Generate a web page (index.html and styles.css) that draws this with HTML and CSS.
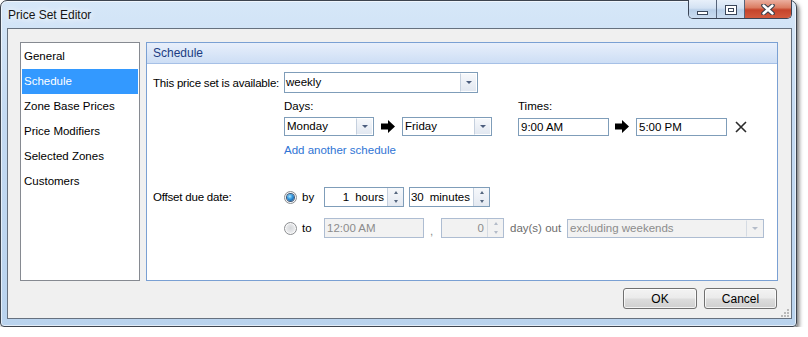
FILE: index.html
```html
<!DOCTYPE html>
<html lang="en">
  <head>
    <meta charset="utf-8" />
    <meta name="viewport" content="width=device-width, initial-scale=1" />
    <link rel="stylesheet" href="styles.css">
    <title>Price Set Editor</title>
  </head>
  <body>
    <div class="window">
      <!-- Barra de título -->
      <div class="titlebar">
        <span class="title">Price Set Editor</span>
        <div class="caption-buttons">
          <span class="cap cap-min"><i></i></span>
          <span class="cap cap-max"><i></i></span>
          <span class="cap cap-close">
            <svg width="14" height="11" viewBox="0 0 14 11">
              <path d="M2.5 1.5 L11.5 9.5 M11.5 1.5 L2.5 9.5" stroke="#3a3f4a" stroke-width="4.6" stroke-linecap="round" fill="none" />
              <path d="M2.5 1.5 L11.5 9.5 M11.5 1.5 L2.5 9.5" stroke="#ffffff" stroke-width="2.4" stroke-linecap="round" fill="none" />
            </svg>
          </span>
        </div>
      </div>

      <div class="client">
        <div class="main">
          <ul class="nav">
            <li>General</li>
            <li class="active">Schedule</li>
            <li>Zone Base Prices</li>
            <li>Price Modifiers</li>
            <li>Selected Zones</li>
            <li>Customers</li>
          </ul>

          <section class="panel">
            <header class="panel-head">Schedule</header>
            <div class="panel-body">
              <div class="row row-avail">
                <span class="field-label">This price set is available:</span>
                <div class="combo combo-avail"><span class="val">weekly</span><span class="drop"></span></div>
              </div>

              <div class="row row-sched">
                <div class="group group-days">
                  <div class="group-label">Days:</div>
                  <div class="group-fields">
                    <div class="combo combo-day"><span class="val">Monday</span><span class="drop"></span></div>
                    <svg class="arrow" width="14" height="13" viewBox="0 0 14 13"><path d="M0 3.5 H7 V0 L14 6.5 L7 13 V9.5 H0 Z" fill="#000" /></svg>
                    <div class="combo combo-day"><span class="val">Friday</span><span class="drop"></span></div>
                  </div>
                </div>
                <div class="group group-times">
                  <div class="group-label">Times:</div>
                  <div class="group-fields">
                    <div class="textbox time">9:00 AM</div>
                    <svg class="arrow arrow-time" width="14" height="13" viewBox="0 0 14 13"><path d="M0 3.5 H7 V0 L14 6.5 L7 13 V9.5 H0 Z" fill="#000" /></svg>
                    <div class="textbox time">5:00 PM</div>
                    <svg class="remove" width="12" height="12" viewBox="0 0 12 12"><path d="M1 1 L11 11 M11 1 L1 11" stroke="#2b2b2b" stroke-width="1.6" fill="none" /></svg>
                  </div>
                </div>
              </div>

              <div class="row row-link">
                <a class="add-link">Add another schedule</a>
              </div>

              <div class="row row-offset">
                <span class="field-label">Offset due date:</span>
                <span class="option"><span class="radio checked"></span><span class="opt-text">by</span></span>
                <div class="spinner spin-hours">
                  <span class="spin-val">1<span class="unit">hours</span></span>
                  <span class="spin-btns"><b class="up"></b><b class="down"></b></span>
                </div>
                <div class="spinner spin-minutes">
                  <span class="spin-val">30<span class="unit">minutes</span></span>
                  <span class="spin-btns"><b class="up"></b><b class="down"></b></span>
                </div>
              </div>

              <div class="row row-to">
                <span class="option"><span class="radio"></span><span class="opt-text">to</span></span>
                <div class="textbox is-disabled box-time">12:00 AM</div>
                <span class="comma">,</span>
                <div class="spinner is-disabled spin-days">
                  <span class="spin-val">0</span>
                  <span class="spin-btns"><b class="up"></b><b class="down"></b></span>
                </div>
                <span class="days-out">day(s) out</span>
                <div class="combo is-disabled combo-excl"><span class="val">excluding weekends</span><span class="drop"></span></div>
              </div>
            </div>
          </section>
        </div>

        <div class="footer">
          <button class="btn btn-ok">OK</button>
          <button class="btn btn-cancel">Cancel</button>
        </div>

        <svg class="grip" width="8" height="8" viewBox="0 0 8 8">
          <rect x="6" y="0" width="2" height="2" fill="#b9b9b9" />
          <rect x="3" y="3" width="2" height="2" fill="#b9b9b9" />
          <rect x="6" y="3" width="2" height="2" fill="#b9b9b9" />
          <rect x="0" y="6" width="2" height="2" fill="#b9b9b9" />
          <rect x="3" y="6" width="2" height="2" fill="#b9b9b9" />
          <rect x="6" y="6" width="2" height="2" fill="#b9b9b9" />
        </svg>
      </div>
    </div>
  </body>
</html>
```

FILE: styles.css
```css
/* Estilos gerais */
*, *::before, *::after {
  box-sizing: border-box;
}

html, body {
  margin: 0;
  padding: 0;
  background: #fff;
  font-family: 'Liberation Sans', Arial, sans-serif;
  font-size: 11.5px;
  color: #000;
}

/* Janela */
.window {
  width: 797px;
  height: 327px;
  display: flex;
  flex-direction: column;
  padding: 0 4px 7px 6px;
  border: 1px solid #3d444f;
  border-radius: 7px 7px 4px 4px;
  background: linear-gradient(180deg, #d6e7f8 0%, #c4daf2 35%, #b9d3ee 100%);
  box-shadow: 2px 3px 4px rgba(0, 0, 0, 0.55), inset 0 0 0 1px rgba(255, 255, 255, 0.6);
}

.titlebar {
  height: 27px;
  flex: none;
  display: flex;
  justify-content: space-between;
  align-items: flex-start;
}

.title {
  margin: 7px 0 0 1px;
  font-size: 12px;
  line-height: 15px;
  color: #141414;
  text-shadow: 0 0 6px #fff, 0 0 10px #fff;
}

.caption-buttons {
  display: flex;
  height: 19px;
  margin-top: -1px;
  border: 1px solid #3b4556;
  border-top: none;
  border-radius: 0 0 5px 5px;
  overflow: hidden;
}

.cap {
  display: flex;
  justify-content: center;
  height: 100%;
  background: linear-gradient(180deg, #e8f0fa 0%, #d3e2f3 45%, #b9cfe8 55%, #cadcf0 100%);
}

.cap-min {
  width: 27px;
}

.cap-min i {
  width: 11px;
  height: 4px;
  margin-top: 11px;
  background: #fff;
  border: 1px solid #3a4659;
}

.cap-max {
  width: 28px;
  border-left: 1px solid #56647a;
}

.cap-max i {
  position: relative;
  width: 12px;
  height: 10px;
  margin-top: 5px;
  background: #fff;
  border: 1px solid #3a4659;
}

.cap-max i::after {
  content: '';
  position: absolute;
  left: 2px;
  top: 2px;
  width: 6px;
  height: 4px;
  border: 1px solid #3a4659;
}

.cap-close {
  width: 47px;
  align-items: center;
  border-left: 1px solid #56647a;
  background: linear-gradient(180deg, #ebaf9f 0%, #db7d63 42%, #c5442b 55%, #d35a3d 100%);
}

/* Área cliente */
.client {
  position: relative;
  height: 291px;
  display: flex;
  flex-direction: column;
  padding: 13px 13px 9px 12px;
  border: 1px solid #66717f;
  background: #f0f0f0;
}

.main {
  height: 239px;
  display: flex;
  gap: 6px;
}

.nav {
  width: 120px;
  margin: 0;
  padding: 1px;
  list-style: none;
  background: #fff;
  border: 1px solid #868a91;
}

.nav li {
  height: 25px;
  line-height: 25px;
  padding-left: 2px;
  color: #000;
}

.nav li.active {
  background: #3399ff;
  color: #fff;
}

/* Painel */
.panel {
  flex: 1;
  display: flex;
  flex-direction: column;
  background: #fff;
  border: 1px solid #7aa0d3;
}

.panel-head {
  height: 21px;
  padding-left: 6px;
  font-size: 12px;
  line-height: 20px;
  color: #1c3c82;
  background: linear-gradient(180deg, #e8effb 0%, #cddef5 100%);
  border-bottom: 1px solid #a6c0e6;
}

.panel-body {
  padding: 0 6px;
}

.row {
  display: flex;
  align-items: center;
  white-space: nowrap;
}

.field-label {
  width: 131px;
  flex: none;
  letter-spacing: -0.2px;
}

.row-avail {
  margin-top: 8px;
}

.row-sched,
.row-link,
.row-to {
  padding-left: 131px;
}

.row-sched {
  margin-top: 6px;
  align-items: flex-start;
}

.group-label {
  line-height: 15px;
}

.group-fields {
  display: flex;
  align-items: center;
  margin-top: 3px;
}

.group-times {
  margin-left: 26px;
}

/* Campos */
.combo {
  display: flex;
  height: 19px;
  background: #fff;
  border: 1px solid #7f9db9;
}

.combo .val {
  flex: 1;
  padding-left: 2px;
  line-height: 17px;
  overflow: hidden;
}

.combo .drop {
  width: 17px;
  display: flex;
  align-items: center;
  justify-content: center;
  border: 1px solid #fff;
  border-left-color: #c5d0de;
  background: linear-gradient(180deg, #f6f8fb 0%, #e2e8f1 100%);
}

.combo .drop::before {
  content: '';
  border-left: 3px solid transparent;
  border-right: 3px solid transparent;
  border-top: 3px solid #4b5d7d;
}

.combo-avail {
  width: 194px;
  height: 21px;
}

.combo-avail .val {
  padding-left: 1px;
  line-height: 19px;
}

.combo-day {
  width: 90px;
}

.arrow {
  margin: 0 7px;
}

.arrow-time {
  margin: 0 7px 0 6px;
}

.textbox {
  height: 18px;
  padding-left: 2px;
  line-height: 16px;
  background: #fff;
  border: 1px solid #7f9db9;
}

.time {
  width: 91px;
  margin-top: 1px;
}

.remove {
  margin-left: 8px;
}

.row-link {
  margin-top: 7px;
}

.add-link {
  line-height: 15px;
  color: #2f74d5;
}

/* Deslocamento */
.row-offset {
  margin-top: 29px;
  height: 20px;
}

.option {
  width: 40px;
  flex: none;
  display: flex;
  align-items: center;
}

.opt-text {
  margin-left: 5px;
}

.radio {
  position: relative;
  width: 13px;
  height: 13px;
  border-radius: 50%;
  border: 1px solid #8b8d90;
  background: radial-gradient(circle at 50% 45%, #d5d7da 0%, #e9eaec 55%, #f6f6f6 100%);
  box-shadow: inset 0 0 0 1px rgba(255, 255, 255, 0.7);
}

.radio.checked::after {
  content: '';
  position: absolute;
  left: 2px;
  top: 2px;
  width: 7px;
  height: 7px;
  border-radius: 50%;
  background: radial-gradient(circle at 40% 35%, #a8e6ff 0%, #2f93dc 45%, #0d3f78 100%);
  box-shadow: 0 0 0 1px #3d5878;
}

.spinner {
  display: flex;
  height: 20px;
  background: #fff;
  border: 1px solid #7f9db9;
}

.spin-val {
  flex: 1;
  padding-right: 3px;
  text-align: right;
  line-height: 18px;
}

.unit {
  margin-left: 6px;
}

.spin-btns {
  width: 16px;
  display: flex;
  flex-direction: column;
  border-left: 1px solid #c5d0de;
  background: linear-gradient(180deg, #f6f8fb 0%, #e4e9f1 100%);
}

.spin-btns b {
  flex: 1;
  display: flex;
  align-items: center;
  justify-content: center;
}

.spin-btns .up::before {
  content: '';
  border-left: 2.5px solid transparent;
  border-right: 2.5px solid transparent;
  border-bottom: 3px solid #56677f;
}

.spin-btns .down::before {
  content: '';
  border-left: 2.5px solid transparent;
  border-right: 2.5px solid transparent;
  border-top: 3px solid #56677f;
}

.spin-hours {
  width: 80px;
}

.spin-minutes {
  width: 81px;
  margin-left: 5px;
}

/* Linha "to" */
.row-to {
  margin-top: 11px;
  height: 20px;
}

.box-time {
  width: 100px;
  height: 20px;
  line-height: 18px;
}

.comma {
  width: 17px;
  align-self: flex-end;
  padding-left: 6px;
  line-height: 14px;
  color: #8a8a8a;
}

.spin-days {
  width: 63px;
}

.days-out {
  width: 63px;
  padding-left: 6px;
  color: #6d6d6d;
}

.combo-excl {
  width: 197px;
}

.is-disabled {
  color: #8c8c8c;
  background: #f2f2f2;
  border-color: #aebdd2;
}

.is-disabled .drop,
.is-disabled .spin-btns {
  border-left-color: #d5dbe3;
  background: #f2f2f2;
  border-top-color: #f2f2f2;
  border-right-color: #f2f2f2;
  border-bottom-color: #f2f2f2;
}

.is-disabled .drop::before,
.is-disabled .down::before {
  border-top-color: #b4bcc9;
}

.is-disabled .up::before {
  border-bottom-color: #b4bcc9;
}

/* Rodapé */
.footer {
  display: flex;
  justify-content: flex-end;
  gap: 7px;
  margin-top: 7px;
  padding-right: 1px;
}

.btn {
  height: 21px;
  padding: 0;
  font-family: inherit;
  font-size: 12px;
  color: #000;
  border: 1px solid #707070;
  border-radius: 3px;
  background: linear-gradient(180deg, #f3f3f3 0%, #ebebeb 48%, #dddddd 52%, #cfcfcf 100%);
  box-shadow: inset 0 0 0 1px rgba(255, 255, 255, 0.75);
}

.btn-ok {
  width: 74px;
}

.btn-cancel {
  width: 73px;
}

.grip {
  position: absolute;
  right: 2px;
  bottom: 1px;
}
```
